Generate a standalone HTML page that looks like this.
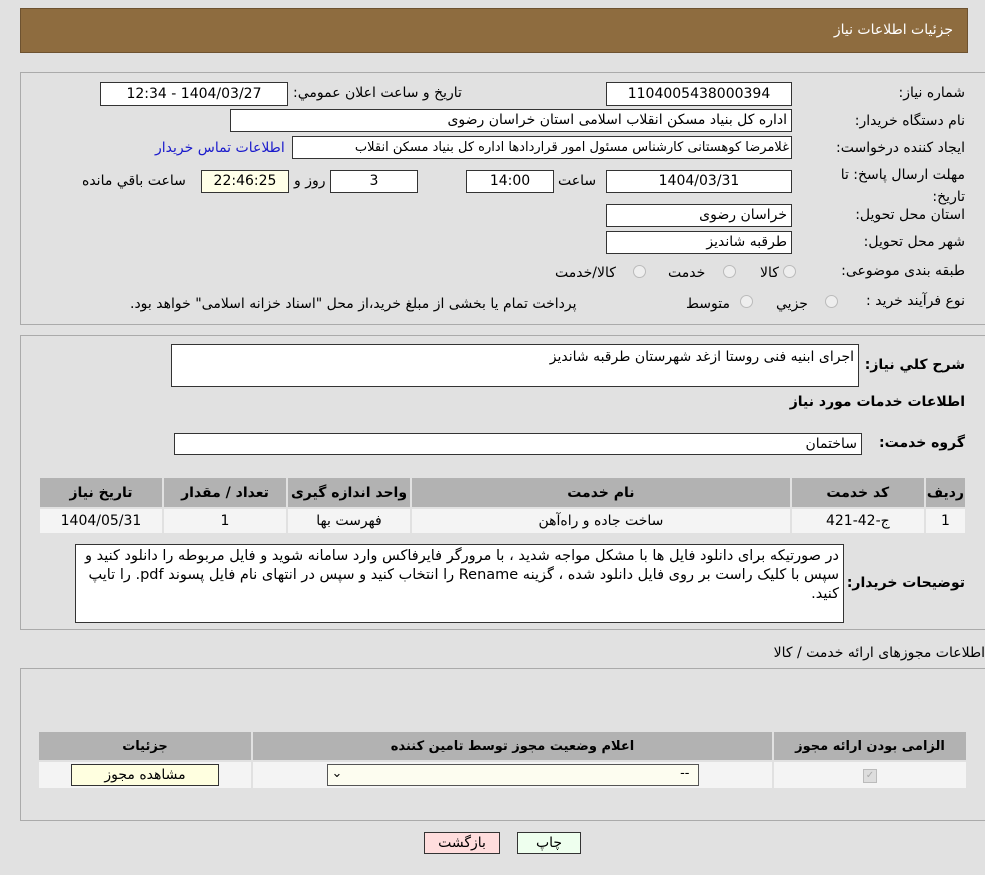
<!DOCTYPE html>
<html><head><meta charset="utf-8"><style>
body{margin:0;width:985px;height:875px;background:#e1e1e1;font-family:"DejaVu Sans","Liberation Sans",sans-serif;font-size:14px;color:#000;position:relative;overflow:hidden;direction:rtl}
.a{position:absolute}
.box{position:absolute;background:#fff;border:1px solid #333;box-sizing:border-box;padding:0 4px;line-height:21px;white-space:nowrap;overflow:hidden}
.c{text-align:center}
.l{position:absolute;white-space:nowrap}
.b{font-weight:bold;font-size:14px;letter-spacing:-0.3px}
.panel{position:absolute;border:1px solid #aaa;border-right:none;box-sizing:border-box}
table{border-collapse:collapse}
.rd{width:11px;height:11px;border-radius:50%;border:1px solid #bbb;background:#eee;position:absolute}
</style></head><body>
<div class="a" style="left:20px;top:8px;width:948px;height:45px;background:#8e6c3f;border:1px solid #6d5230;box-sizing:border-box"></div>
<div class="l" style="right:32px;top:22px;color:#fff;font-size:14px">جزئیات اطلاعات نیاز</div>

<div class="panel" style="left:20px;top:72px;width:965px;height:253px"></div>
<div class="l" style="right:20px;top:85px">شماره نیاز:</div>
<div class="box c" style="left:606px;top:82px;width:186px;height:24px;line-height:22px">1104005438000394</div>
<div class="l" style="left:293px;top:85px">تاریخ و ساعت اعلان عمومي:</div>
<div class="box c" style="left:100px;top:82px;width:188px;height:24px;line-height:22px">1404/03/27 - 12:34</div>
<div class="l" style="right:20px;top:113px">نام دستگاه خریدار:</div>
<div class="box" style="left:230px;top:109px;width:562px;height:23px">اداره کل بنیاد مسکن انقلاب اسلامی استان خراسان رضوی</div>
<div class="l" style="right:20px;top:140px">ایجاد کننده درخواست:</div>
<div class="box" style="left:292px;top:136px;width:500px;height:23px;padding:0 2px;font-size:13px">غلامرضا کوهستانی کارشناس مسئول امور قراردادها اداره کل بنیاد مسکن انقلاب</div>
<div class="l" style="left:155px;top:140px;color:#1a1acc">اطلاعات تماس خریدار</div>
<div class="l" style="right:20px;top:164px;line-height:22px;width:160px;white-space:normal">مهلت ارسال پاسخ: تا تاریخ:</div>
<div class="box c" style="left:606px;top:170px;width:186px;height:23px">1404/03/31</div>
<div class="l" style="left:558px;top:173px">ساعت</div>
<div class="box c" style="left:466px;top:170px;width:88px;height:23px">14:00</div>
<div class="box c" style="left:330px;top:170px;width:88px;height:23px">3</div>
<div class="l" style="left:294px;top:173px">روز و</div>
<div class="box c" style="left:201px;top:170px;width:88px;height:23px;background:#ffffe8">22:46:25</div>
<div class="l" style="left:82px;top:173px">ساعت باقي مانده</div>
<div class="l" style="right:20px;top:207px">استان محل تحویل:</div>
<div class="box" style="left:606px;top:204px;width:186px;height:23px">خراسان رضوی</div>
<div class="l" style="right:20px;top:234px">شهر محل تحویل:</div>
<div class="box" style="left:606px;top:231px;width:186px;height:23px">طرقبه شانديز</div>
<div class="l" style="right:20px;top:263px">طبقه بندی موضوعی:</div>
<div class="rd" style="left:783px;top:265px"></div><div class="l" style="left:760px;top:265px">کالا</div>
<div class="rd" style="left:723px;top:265px"></div><div class="l" style="left:668px;top:265px">خدمت</div>
<div class="rd" style="left:633px;top:265px"></div><div class="l" style="left:555px;top:265px">کالا/خدمت</div>
<div class="l" style="right:20px;top:293px">نوع فرآیند خرید :</div>
<div class="rd" style="left:825px;top:295px"></div><div class="l" style="left:776px;top:296px">جزیي</div>
<div class="rd" style="left:740px;top:295px"></div><div class="l" style="left:686px;top:296px">متوسط</div>
<div class="l" style="left:130px;top:296px">پرداخت تمام یا بخشی از مبلغ خرید،از محل "اسناد خزانه اسلامی" خواهد بود.</div>

<div class="panel" style="left:20px;top:335px;width:965px;height:295px"></div>
<div class="l b" style="right:20px;top:357px">شرح کلي نیاز:</div>
<div class="box" style="left:171px;top:344px;width:688px;height:43px;line-height:20px;white-space:normal;padding:2px 4px">اجرای ابنیه فنی روستا ازغد شهرستان طرقبه شانديز</div>
<div class="l b" style="right:20px;top:394px">اطلاعات خدمات مورد نیاز</div>
<div class="l b" style="right:20px;top:435px">گروه خدمت:</div>
<div class="box" style="left:174px;top:433px;width:688px;height:22px;line-height:20px">ساختمان</div>
<table class="a" style="left:38px;top:476px;width:929px;border:2px solid #c8c8c8;font-size:14px">
<tr style="background:#b2b2b2;font-weight:bold;height:31px;text-align:center">
<td style="width:30px;border:2px solid #e1e1e1">ردیف</td><td style="width:130px;border:2px solid #e1e1e1">کد خدمت</td><td style="border:2px solid #e1e1e1">نام خدمت</td><td style="width:120px;border:2px solid #e1e1e1">واحد اندازه گیری</td><td style="width:120px;border:2px solid #e1e1e1">تعداد / مقدار</td><td style="width:120px;border:2px solid #e1e1e1">تاریخ نیاز</td></tr>
<tr style="background:#f4f4f4;height:26px;text-align:center">
<td style="border:2px solid #e1e1e1">1</td><td style="border:2px solid #e1e1e1">ج-42-421</td><td style="border:2px solid #e1e1e1">ساخت جاده و راه‌آهن</td><td style="border:2px solid #e1e1e1">فهرست بها</td><td style="border:2px solid #e1e1e1">1</td><td style="border:2px solid #e1e1e1">1404/05/31</td></tr>
</table>
<div class="l b" style="right:20px;top:575px">توضیحات خریدار:</div>
<div class="box" style="left:75px;top:544px;width:769px;height:79px;line-height:19px;white-space:normal;padding:2px 4px;font-size:14.5px">در صورتیکه برای دانلود فایل ها با مشکل مواجه شدید ، با مرورگر فایرفاکس وارد سامانه شوید و فایل مربوطه را دانلود کنید و سپس با کلیک راست بر روی فایل دانلود شده ، گزینه Rename را انتخاب کنید و سپس در انتهای نام فایل پسوند pdf. را تایپ کنید.</div>

<div class="l" style="right:0px;top:645px">اطلاعات مجوزهای ارائه خدمت / کالا</div>
<div class="panel" style="left:20px;top:668px;width:965px;height:153px"></div>
<table class="a" style="left:37px;top:730px;width:931px;border:2px solid #c8c8c8;font-size:13px">
<tr style="background:#b2b2b2;font-weight:bold;height:30px;text-align:center">
<td style="width:190px;border:2px solid #e1e1e1">الزامی بودن ارائه مجوز</td><td style="border:2px solid #e1e1e1">اعلام وضعیت مجوز توسط تامین کننده</td><td style="width:210px;border:2px solid #e1e1e1">جزئیات</td></tr>
<tr style="background:#f4f4f4;height:28px;text-align:center">
<td style="border:2px solid #e1e1e1"><span style="display:inline-block;width:12px;height:12px;background:#ddd;border:1px solid #bbb;color:#aaa;font-size:10px;line-height:12px">✓</span></td>
<td style="border:2px solid #e1e1e1"><div style="margin:0 auto;width:372px;height:22px;border:1px solid #555;background:#fdfdf0;box-sizing:border-box;position:relative"><span style="position:absolute;right:8px;top:1px">--</span><span style="position:absolute;left:4px;top:1px">⌄</span></div></td>
<td style="border:2px solid #e1e1e1"><div style="margin:0 auto;width:148px;height:22px;border:1px solid #333;background:#ffffe0;box-sizing:border-box;line-height:20px;font-size:14px">مشاهده مجوز</div></td></tr>
</table>
<div class="a c" style="left:424px;top:832px;width:74px;height:20px;border:1px solid #333;background:#fdd;line-height:20px">بازگشت</div>
<div class="a c" style="left:517px;top:832px;width:62px;height:20px;border:1px solid #333;background:#efe;line-height:20px">چاپ</div>
</body></html>
